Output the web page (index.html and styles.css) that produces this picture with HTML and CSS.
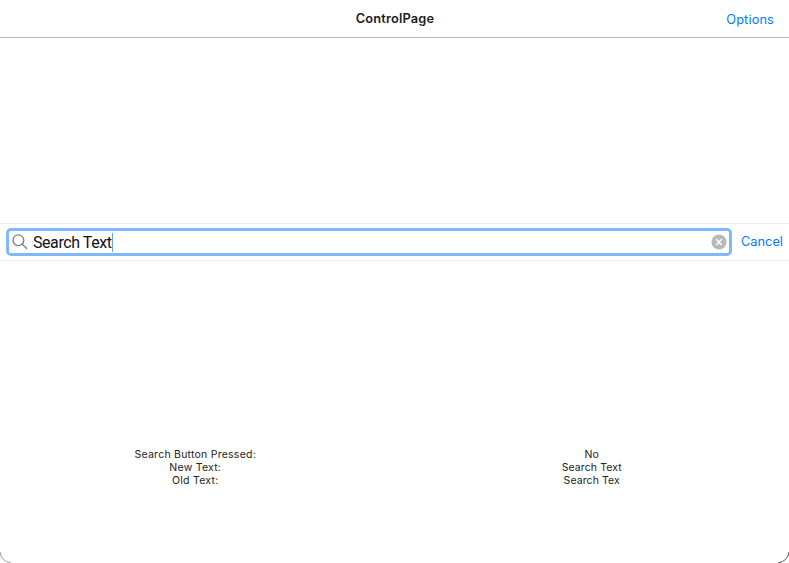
FILE: index.html
```html
<!DOCTYPE html>
<html lang="en">
<head>
<meta charset="utf-8">
<title>ControlPage</title>
<link rel="stylesheet" href="styles.css">
</head>
<body>
<div class="window">
  <header class="navbar">
    <h1 class="title">ControlPage</h1>
    <a class="link options">Options</a>
  </header>
  <main class="content">
    <div class="searchbar">
      <div class="field">
        <svg class="magnifier" width="16" height="16" viewBox="0 0 16 16" fill="none" stroke="#808084" stroke-width="1.35" stroke-linecap="round"><circle cx="6.4" cy="6.2" r="5.4"/><path d="M10.4 10.2L14.7 14.5"/></svg>
        <span class="query">Search Text</span><span class="caret"></span>
        <svg class="clear" width="16" height="16" viewBox="0 0 16 16"><circle cx="8" cy="8" r="7.6" fill="#b9b9b9"/><path d="M5.6 5.6L10.4 10.4M10.4 5.6L5.6 10.4" stroke="#fff" stroke-width="1.4" stroke-linecap="round"/></svg>
      </div>
      <a class="link cancel">Cancel</a>
    </div>
  </main>
  <section class="status">
    <div class="column labels"><span>Search Button Pressed:</span><span>New Text:</span><span>Old Text:</span></div>
    <div class="column values"><span>No</span><span>Search Text</span><span>Search Tex</span></div>
  </section>
  <svg class="corner left" width="12" height="12" viewBox="0 0 12 12" fill="none"><path d="M0 1Q1 10 11 12" stroke="#999"/></svg>
  <svg class="corner right" width="12" height="12" viewBox="0 0 12 12" fill="none"><path d="M12 1Q11 10 1 12" stroke="#555"/></svg>
</div>
</body>
</html>
```
FILE: styles.css
```css
* { box-sizing: border-box; }
body { margin: 0; background: #fff; font-family: Inter, "Liberation Sans", sans-serif; }
.window { position: relative; display: flex; flex-direction: column; height: 563px; overflow: hidden; }
.navbar { display: grid; grid-template-columns: 1fr auto 1fr; align-items: center; height: 38px; padding: 0 15px; border-bottom: 1px solid #b8b8b8; }
.title { grid-column: 2; margin: 1px 0 0 1px; font-size: 12.8px; line-height: 18px; font-weight: 600; letter-spacing: .17px; color: #1c1c1e; }
.link { color: #007aff; font-size: 12.8px; line-height: 18px; letter-spacing: .12px; }
.options { justify-self: end; padding-top: 2px; }
.content { height: 410px; flex: none; padding-top: 185px; }
.searchbar { display: flex; align-items: flex-start; height: 38px; padding: 4px 6px 0; border-top: 1px solid #ececec; border-bottom: 1px solid #ececec; }
.field { display: flex; flex: none; align-items: center; width: 726px; height: 28px; padding: 0 2px 0 3px; border: 3px solid #80b8ff; border-radius: 5px; }
.magnifier { margin-right: 5px; flex: none; }
.query { font-family: Roboto, sans-serif; font-size: 16px; line-height: 20px; letter-spacing: -.43px; color: #111; padding-top: 2px; white-space: nowrap; }
.caret { width: 1px; height: 19px; background: #6ba5e8; margin-top: 1px; }
.clear { margin-left: auto; flex: none; }
.cancel { margin: 5px 0 0 9px; letter-spacing: 0; }
.status { display: grid; grid-template-columns: 1fr 1fr; color: #222; font-size: 10.5px; line-height: 13px; letter-spacing: .24px; }
.column { display: flex; flex-direction: column; align-items: center; }
.labels { padding-right: 4px; }
.values { letter-spacing: .1px; }
.corner { position: absolute; bottom: 0; }
.left { left: 0; }
.right { right: 0; }
```
